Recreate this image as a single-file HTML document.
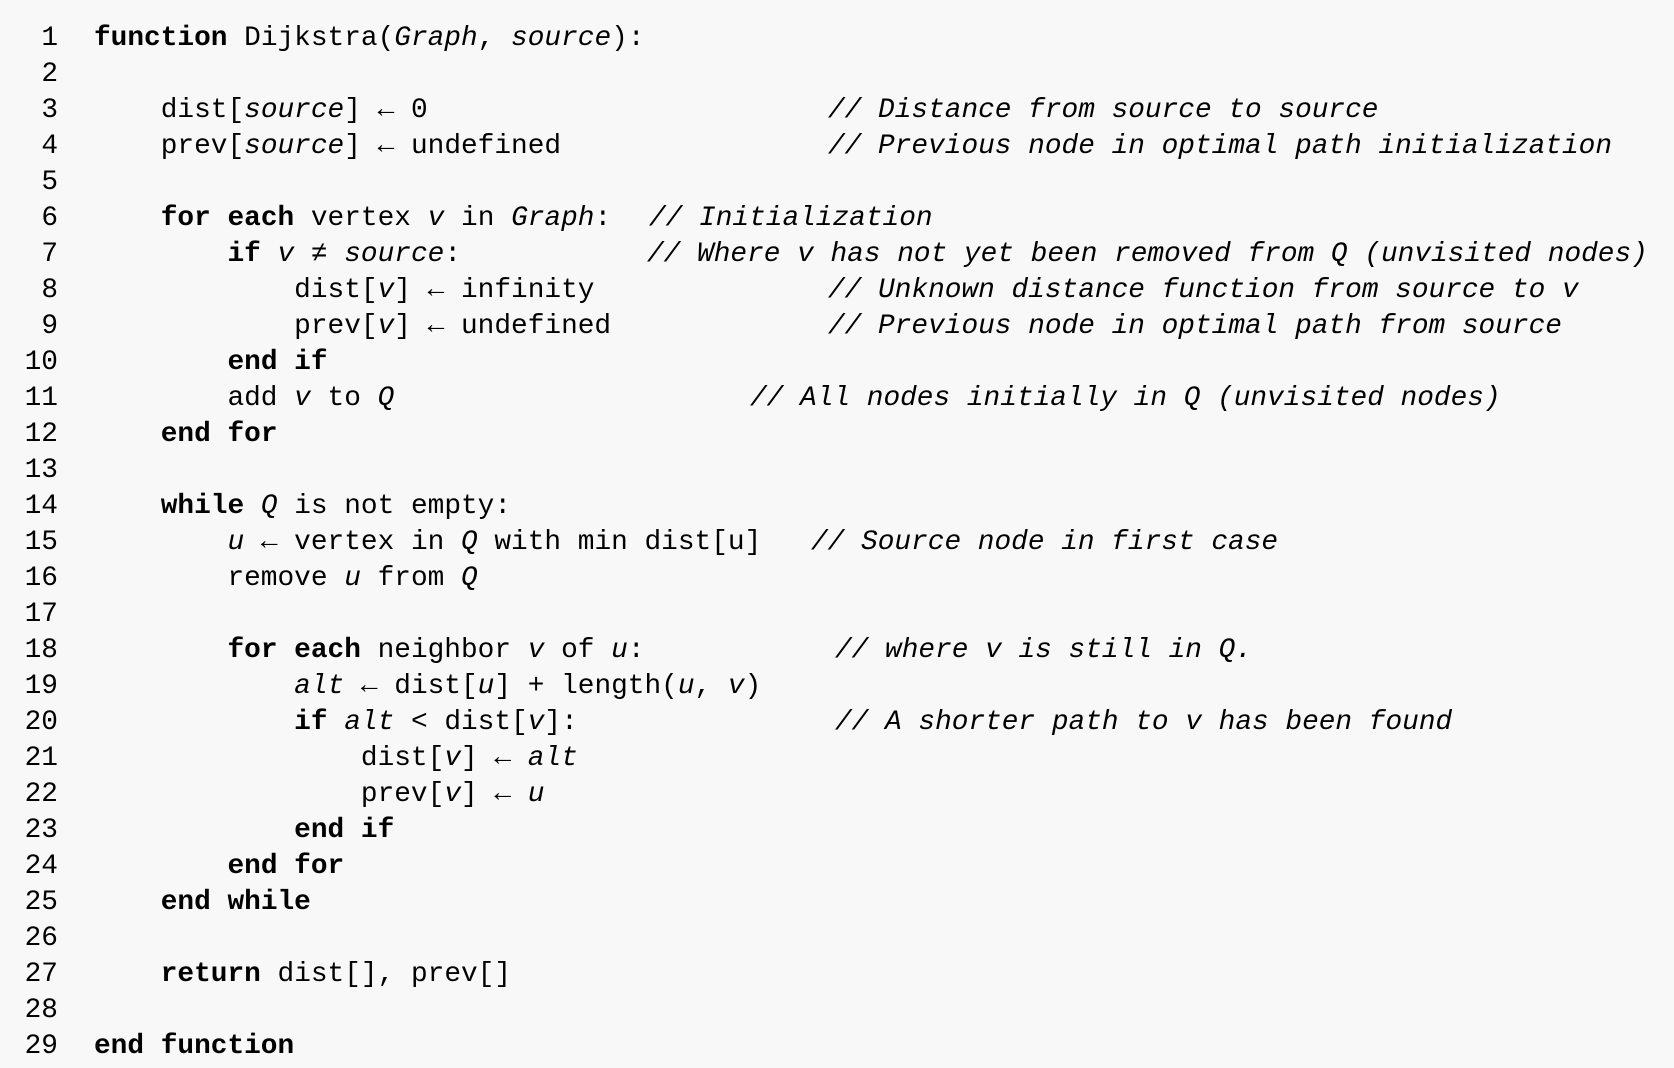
<!DOCTYPE html>
<html><head><meta charset="utf-8"><style>
html,body{margin:0;padding:0;background:#f8f8f8;}
body{width:1674px;height:1068px;overflow:hidden;position:relative;font-family:"Liberation Mono","DejaVu Sans Mono",monospace;font-size:27.8px;color:#000;}
.w{position:absolute;left:0;top:2px;}
.l{position:absolute;left:0;height:36px;line-height:36px;width:1674px;white-space:pre;}
.n{position:absolute;right:1616px;}
.c{position:absolute;left:94px;}
.m{position:absolute;font-style:italic;}
b{font-weight:bold;}
i{font-style:italic;}
</style></head><body><div class="w">
<div class="l" style="top:19px"><span class="n">1</span><span class="c"><b>function</b> Dijkstra(<i>Graph</i>, <i>source</i>):</span></div>
<div class="l" style="top:55px"><span class="n">2</span></div>
<div class="l" style="top:91px"><span class="n">3</span><span class="c">    dist[<i>source</i>] ← 0</span><span class="m" style="left:828px">// Distance from source to source</span></div>
<div class="l" style="top:127px"><span class="n">4</span><span class="c">    prev[<i>source</i>] ← undefined</span><span class="m" style="left:828px">// Previous node in optimal path initialization</span></div>
<div class="l" style="top:163px"><span class="n">5</span></div>
<div class="l" style="top:199px"><span class="n">6</span><span class="c">    <b>for each</b> vertex <i>v</i> in <i>Graph</i>:</span><span class="m" style="left:649px">// Initialization</span></div>
<div class="l" style="top:235px"><span class="n">7</span><span class="c">        <b>if</b> <i>v</i> ≠ <i>source</i>:</span><span class="m" style="left:647px">// Where v has not yet been removed from Q (unvisited nodes)</span></div>
<div class="l" style="top:271px"><span class="n">8</span><span class="c">            dist[<i>v</i>] ← infinity</span><span class="m" style="left:828px">// Unknown distance function from source to v</span></div>
<div class="l" style="top:307px"><span class="n">9</span><span class="c">            prev[<i>v</i>] ← undefined</span><span class="m" style="left:828px">// Previous node in optimal path from source</span></div>
<div class="l" style="top:343px"><span class="n">10</span><span class="c">        <b>end if</b></span></div>
<div class="l" style="top:379px"><span class="n">11</span><span class="c">        add <i>v</i> to <i>Q</i></span><span class="m" style="left:750px">// All nodes initially in Q (unvisited nodes)</span></div>
<div class="l" style="top:415px"><span class="n">12</span><span class="c">    <b>end for</b></span></div>
<div class="l" style="top:451px"><span class="n">13</span></div>
<div class="l" style="top:487px"><span class="n">14</span><span class="c">    <b>while</b> <i>Q</i> is not empty:</span></div>
<div class="l" style="top:523px"><span class="n">15</span><span class="c">        <i>u</i> ← vertex in <i>Q</i> with min dist[u]</span><span class="m" style="left:811px">// Source node in first case</span></div>
<div class="l" style="top:559px"><span class="n">16</span><span class="c">        remove <i>u</i> from <i>Q</i></span></div>
<div class="l" style="top:595px"><span class="n">17</span></div>
<div class="l" style="top:631px"><span class="n">18</span><span class="c">        <b>for each</b> neighbor <i>v</i> of <i>u</i>:</span><span class="m" style="left:835px">// where v is still in Q.</span></div>
<div class="l" style="top:667px"><span class="n">19</span><span class="c">            <i>alt</i> ← dist[<i>u</i>] + length(<i>u</i>, <i>v</i>)</span></div>
<div class="l" style="top:703px"><span class="n">20</span><span class="c">            <b>if</b> <i>alt</i> &lt; dist[<i>v</i>]:</span><span class="m" style="left:835px">// A shorter path to v has been found</span></div>
<div class="l" style="top:739px"><span class="n">21</span><span class="c">                dist[<i>v</i>] ← <i>alt</i></span></div>
<div class="l" style="top:775px"><span class="n">22</span><span class="c">                prev[<i>v</i>] ← <i>u</i></span></div>
<div class="l" style="top:811px"><span class="n">23</span><span class="c">            <b>end if</b></span></div>
<div class="l" style="top:847px"><span class="n">24</span><span class="c">        <b>end for</b></span></div>
<div class="l" style="top:883px"><span class="n">25</span><span class="c">    <b>end while</b></span></div>
<div class="l" style="top:919px"><span class="n">26</span></div>
<div class="l" style="top:955px"><span class="n">27</span><span class="c">    <b>return</b> dist[], prev[]</span></div>
<div class="l" style="top:991px"><span class="n">28</span></div>
<div class="l" style="top:1027px"><span class="n">29</span><span class="c"><b>end function</b></span></div>
</div></body></html>
